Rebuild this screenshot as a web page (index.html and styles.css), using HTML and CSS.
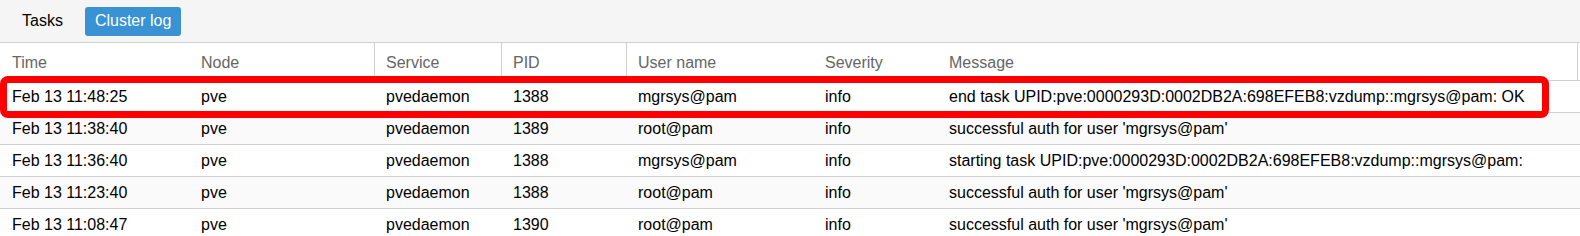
FILE: index.html
```html
<!DOCTYPE html>
<html lang="en">
<head>
  <meta charset="utf-8">
  <title>Cluster log</title>
  <link rel="stylesheet" href="styles.css">
</head>
<body>
  <div class="panel">
    <div class="toolbar">
      <button class="tab">Tasks</button>
      <button class="tab active">Cluster log</button>
    </div>
    <div class="grid">
      <div class="row head">
        <div class="cell">Time</div>
        <div class="cell">Node</div>
        <div class="cell sep">Service</div>
        <div class="cell sep">PID</div>
        <div class="cell sep">User name</div>
        <div class="cell">Severity</div>
        <div class="cell">Message</div>
        <div class="cell filler sep"></div>
      </div>
      <div class="row marked">
        <div class="cell">Feb 13 11:48:25</div>
        <div class="cell">pve</div>
        <div class="cell">pvedaemon</div>
        <div class="cell">1388</div>
        <div class="cell">mgrsys@pam</div>
        <div class="cell">info</div>
        <div class="cell">end task UPID:pve:0000293D:0002DB2A:698EFEB8:vzdump::mgrsys@pam: OK</div>
        <div class="cell filler"></div>
      </div>
      <div class="row alt">
        <div class="cell">Feb 13 11:38:40</div>
        <div class="cell">pve</div>
        <div class="cell">pvedaemon</div>
        <div class="cell">1389</div>
        <div class="cell">root@pam</div>
        <div class="cell">info</div>
        <div class="cell">successful auth for user 'mgrsys@pam'</div>
        <div class="cell filler"></div>
      </div>
      <div class="row">
        <div class="cell">Feb 13 11:36:40</div>
        <div class="cell">pve</div>
        <div class="cell">pvedaemon</div>
        <div class="cell">1388</div>
        <div class="cell">mgrsys@pam</div>
        <div class="cell">info</div>
        <div class="cell">starting task UPID:pve:0000293D:0002DB2A:698EFEB8:vzdump::mgrsys@pam:</div>
        <div class="cell filler"></div>
      </div>
      <div class="row alt">
        <div class="cell">Feb 13 11:23:40</div>
        <div class="cell">pve</div>
        <div class="cell">pvedaemon</div>
        <div class="cell">1388</div>
        <div class="cell">root@pam</div>
        <div class="cell">info</div>
        <div class="cell">successful auth for user 'mgrsys@pam'</div>
        <div class="cell filler"></div>
      </div>
      <div class="row">
        <div class="cell">Feb 13 11:08:47</div>
        <div class="cell">pve</div>
        <div class="cell">pvedaemon</div>
        <div class="cell">1390</div>
        <div class="cell">root@pam</div>
        <div class="cell">info</div>
        <div class="cell">successful auth for user 'mgrsys@pam'</div>
        <div class="cell filler"></div>
      </div>
    </div>
  </div>
</body>
</html>
```

FILE: styles.css
```css
body {
  margin: 0;
  font-family: "Liberation Sans", Arial, sans-serif;
  font-size: 16px;
  color: #000;
  background: #fff;
  overflow: hidden;
}

.toolbar {
  display: flex;
  align-items: center;
  gap: 10px;
  height: 42px;
  padding: 0 10px;
  background-color: #f5f5f5;
  border-bottom: 1px solid #d0d0d0;
  box-sizing: content-box;
}

.tab {
  font-family: inherit;
  font-size: 16px;
  height: 29px;
  padding: 0 12px;
  border: none;
  border-radius: 3px;
  background: transparent;
  color: #000;
}

.tab.active {
  background-color: #3892d4;
  color: #fff;
  padding: 0 10px;
}

.row {
  display: grid;
  grid-template-columns: 189px 185px 127px 125px 187px 124px 640px 1fr;
  height: 31px;
  border-bottom: 1px solid #d0d0d0;
}

.row.head {
  height: 37px;
  color: #666;
}

.row.alt {
  background-color: #fafafa;
}

.cell {
  display: flex;
  align-items: center;
  padding-left: 12px;
  white-space: nowrap;
  overflow: hidden;
}

.head .cell {
  padding-top: 3px;
}

.row:not(.head) .cell {
  padding-top: 1px;
}

.head .sep {
  border-left: 1px solid #d0d0d0;
  padding-left: 11px;
}

.filler {
  padding: 0;
}

.marked {
  position: relative;
}

.marked::after {
  content: "";
  position: absolute;
  left: 0;
  top: -5px;
  width: 1549px;
  height: 42px;
  border: 7px solid #ff0000;
  border-radius: 8px;
  box-sizing: border-box;
}
```
